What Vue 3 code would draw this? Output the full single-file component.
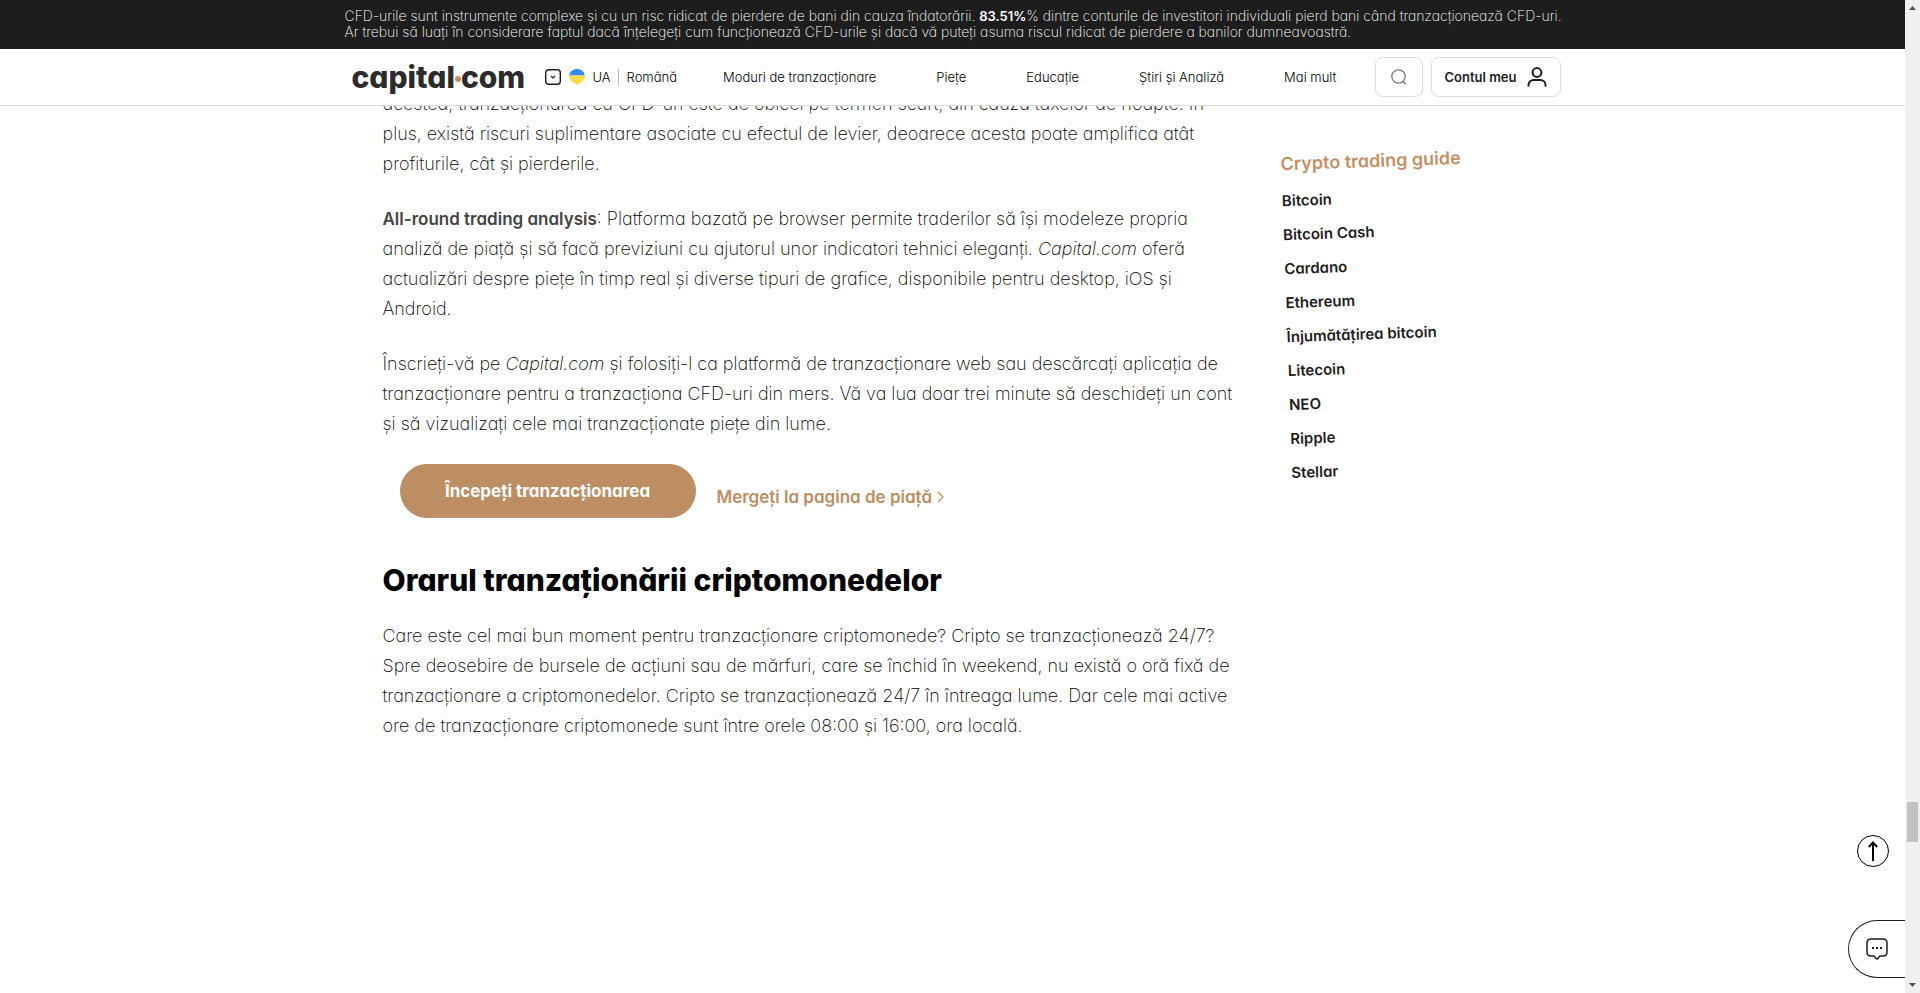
<script setup>
const nav = ['Moduri de tranzacționare', 'Piețe', 'Educație', 'Știri și Analiză', 'Mai mult']
const guides = [
  'Bitcoin',
  'Bitcoin Cash',
  'Cardano',
  'Ethereum',
  'Înjumătățirea bitcoin',
  'Litecoin',
  'NEO',
  'Ripple',
  'Stellar',
]
</script>

<template>
  <div class="screen">
    <div class="page">
      <div class="risk">
        <p class="risk-text">
          CFD-urile sunt instrumente complexe și cu un risc ridicat de pierdere de bani din cauza îndatorării.
          <strong>83.51%</strong>% dintre conturile de investitori individuali pierd bani când tranzacționează CFD-uri.<br />
          Ar trebui să luați în considerare faptul dacă înțelegeți cum funcționează CFD-urile și dacă vă puteți asuma
          riscul ridicat de pierdere a banilor dumneavoastră.
        </p>
      </div>

      <header class="header">
        <div class="header-inner">
          <a class="logo" href="#" aria-label="capital.com">capital<i class="logo-dot"></i>com</a>
          <button class="locale" type="button">
            <svg width="16" height="16" viewBox="0 0 16 16" fill="none" stroke="#1d1d1d">
              <rect x="0.7" y="0.7" width="14.6" height="14.6" rx="3" stroke-width="1.4" />
              <path d="M6 7l2 2 2-2" stroke-width="1.1" />
            </svg>
            <svg class="flag" width="16" height="16" viewBox="0 0 16 16">
              <path d="M0.2 6.500a7.800 6.500 0 0 1 15.600 0z" fill="#338af3" />
              <path d="M0.200 6.500h15.600c0 4.500-2.200 6.500-4.800 7.500L8 16l-3-2C2.400 13 0.200 11 0.200 6.500z" fill="#ffda44" />
            </svg>
            <span class="country">UA</span>
            <span class="lang">Română</span>
          </button>
          <nav class="nav">
            <a v-for="item in nav" :key="item" href="#">{{ item }}</a>
          </nav>
          <div class="actions">
            <button class="box search" type="button" aria-label="Căutare">
              <svg width="16" height="16" viewBox="0 0 16 16" fill="none" stroke="#777" stroke-width="1.300">
                <circle cx="7.500" cy="7.500" r="6.700" />
                <path d="M11.800 12.500l3 2.800" />
              </svg>
            </button>
            <button class="box account" type="button">
              <span>Contul meu</span>
              <svg width="20" height="20" viewBox="0 0 20 20" fill="none" stroke="#1d1d1d" stroke-width="2">
                <circle cx="10" cy="5.500" r="4.400" />
                <path d="M1.500 19.500v-1.500a5 5 0 0 1 5-5h7a5 5 0 0 1 5 5v1.500" />
              </svg>
            </button>
          </div>
        </div>
      </header>

      <div class="content">
        <main class="article">
          <p>
            acestea, tranzacționarea cu CFD-uri este de obicei pe termen scurt, din cauza taxelor de noapte. În<br />
            plus, există riscuri suplimentare asociate cu efectul de levier, deoarece acesta poate amplifica atât<br />
            profiturile, cât și pierderile.
          </p>
          <p>
            <strong>All-round trading analysis</strong>: Platforma bazată pe browser permite traderilor să își modeleze propria<br />
            analiză de piață și să facă previziuni cu ajutorul unor indicatori tehnici eleganți. <em>Capital.com</em> oferă<br />
            actualizări despre piețe în timp real și diverse tipuri de grafice, disponibile pentru desktop, iOS și<br />
            Android.
          </p>
          <p>
            Înscrieți-vă pe <em>Capital.com</em> și folosiți-l ca platformă de tranzacționare web sau descărcați aplicația de<br />
            tranzacționare pentru a tranzacționa CFD-uri din mers. Vă va lua doar trei minute să deschideți un cont<br />
            și să vizualizați cele mai tranzacționate piețe din lume.
          </p>
          <div class="cta">
            <button class="primary" type="button">Începeți tranzacționarea</button>
            <a class="market" href="#">
              Mergeți la pagina de piață
              <svg width="7" height="12" viewBox="0 0 7 12" fill="none" stroke="#bd8d63" stroke-width="1.200">
                <path d="M1 1l5 5-5 5" />
              </svg>
            </a>
          </div>
          <h2>Orarul tranzaționării criptomonedelor</h2>
          <p>
            Care este cel mai bun moment pentru tranzacționare criptomonede? Cripto se tranzacționează 24/7?<br />
            Spre deosebire de bursele de acțiuni sau de mărfuri, care se închid în weekend, nu există o oră fixă de<br />
            tranzacționare a criptomonedelor. Cripto se tranzacționează 24/7 în întreaga lume. Dar cele mai active<br />
            ore de tranzacționare criptomonede sunt între orele 08:00 și 16:00, ora locală.
          </p>
        </main>

        <aside class="guide">
          <h3>Crypto trading guide</h3>
          <ul>
            <li v-for="g in guides" :key="g"><a href="#">{{ g }}</a></li>
          </ul>
        </aside>
      </div>

      <button class="to-top" type="button" aria-label="Sus">
        <svg width="10" height="20" viewBox="0 0 10 20" fill="none" stroke="#000" stroke-width="2">
          <path d="M5 20V1.500M0.800 6L5 1.500 9.200 6" />
        </svg>
      </button>
      <button class="chat" type="button" aria-label="Chat">
        <svg width="22" height="22" viewBox="0 0 22 22" fill="none" stroke="#1d1d1d" stroke-width="1.500">
          <path d="M5 1h12q4 0 4 4v9q0 4-4 4h-2.500q-1 0-1.500 1l-.8 1.300q-1.200 1.300-2.400 0L9 19q-.5-1-1.500-1H5q-4 0-4-4V5q0-4 4-4z" />
          <path d="M6 10h2M10 10h2M14 10h2" stroke-width="2" />
        </svg>
      </button>
    </div>

    <div class="scrollbar" aria-hidden="true">
      <svg width="7" height="4" viewBox="0 0 7 4"><path d="M0 4L3.500 0 7 4z" fill="#505050" /></svg>
      <div class="track"><div class="thumb"></div></div>
      <svg width="7" height="4" viewBox="0 0 7 4"><path d="M0 0L3.500 4 7 0z" fill="#505050" /></svg>
    </div>
  </div>
</template>

<style>
body {
  margin: 0;
  background: #fff;
}
</style>

<style scoped>
.screen {
  display: flex;
  height: 100vh;
  overflow: hidden;
  font-family: Inter, "Open Sans", sans-serif;
  font-feature-settings: "cv11" 1;
  color: #1d1d1d;
}
.page {
  position: relative;
  flex: 1;
  min-width: 0;
  overflow: hidden;
}
button {
  font-family: inherit;
  font-feature-settings: inherit;
  color: inherit;
  cursor: pointer;
}
a {
  color: inherit;
  text-decoration: none;
}
.risk {
  position: relative;
  z-index: 1;
  padding: 8px 0 9px;
  background: #1d1d1d;
  color: #fff;
}
.risk-text {
  max-width: 1216px;
  margin: 0 auto;
  font-size: 14px;
  line-height: 16px;
  font-weight: 200;
  white-space: nowrap;
}
.risk-text strong {
  font-size: 13px;
  font-weight: 600;
}
.header {
  position: relative;
  z-index: 1;
  border-bottom: 1px solid #dcdcdc;
  background: #fff;
}
.header-inner {
  display: flex;
  align-items: center;
  box-sizing: border-box;
  max-width: 1216px;
  height: 56px;
  margin: 0 auto;
  padding: 0 0 0 7px;
}
.logo {
  display: flex;
  align-items: center;
  width: 193px;
  font-size: 30px;
  line-height: 40px;
  font-weight: 800;
  color: #2b2b2b;
}
.logo-dot {
  width: 6px;
  height: 6px;
  margin-top: 4px;
  border-radius: 50%;
  background: #c58f65;
}
.locale {
  display: flex;
  align-items: center;
  padding: 0;
  border: 0;
  background: none;
  font-size: 13px;
  line-height: 16px;
  font-weight: 300;
  color: #000;
}
.flag {
  margin: 0 8px;
}
.country {
  padding-right: 7px;
  border-right: 1px solid #bbb;
}
.lang {
  padding-left: 8px;
}
.nav {
  display: flex;
  flex: 1;
  justify-content: space-between;
  padding: 0 38px 0 46px;
  font-size: 13px;
  line-height: 16px;
  font-weight: 300;
  color: #000;
  white-space: nowrap;
}
.actions {
  display: flex;
  gap: 8px;
}
.box {
  display: flex;
  align-items: center;
  justify-content: center;
  box-sizing: border-box;
  height: 40px;
  border: 1px solid #dcdcdc;
  border-radius: 8px;
  background: #fff;
}
.search {
  width: 48px;
}
.account {
  gap: 10px;
  width: 130px;
  padding: 0;
  font-size: 13px;
  font-weight: 600;
  white-space: nowrap;
}
.content {
  display: flex;
  align-items: flex-start;
  max-width: 1140px;
  margin: -17px auto 0;
}
.article {
  flex: 1;
  min-width: 0;
  font-size: 18px;
  line-height: 30px;
  font-weight: 200;
  color: #000;
  white-space: nowrap;
}
.article p {
  margin: 0 0 25px;
}
.article strong {
  font-size: 17px;
  font-weight: 600;
  color: #444;
}
.cta {
  display: flex;
  align-items: center;
  gap: 21px;
  margin-left: 17px;
}
.primary {
  height: 54px;
  width: 296px;
  padding: 0;
  border: 0;
  border-radius: 27px;
  background: #bd8d63;
  color: #fff;
  font-size: 17px;
  font-weight: 700;
}
.market {
  display: flex;
  align-items: center;
  gap: 5px;
  padding-top: 12px;
  color: #bd8d63;
  font-size: 17px;
  font-weight: 600;
}
h2 {
  margin: 42px 0 21px;
  font-size: 30px;
  line-height: 40px;
  font-weight: 800;
  color: #000;
}
.guide {
  width: 237px;
  margin-top: 57px;
  transform: rotate(-2deg);
  white-space: nowrap;
}
h3 {
  margin: 0;
  font-size: 18px;
  line-height: 28px;
  font-weight: 600;
  color: #c58f65;
}
ul {
  margin: 6px 0 0;
  padding: 0;
  list-style: none;
}
li {
  font-size: 15px;
  line-height: 34px;
  font-weight: 600;
}
.to-top {
  position: absolute;
  right: 16px;
  bottom: 126px;
  display: flex;
  align-items: center;
  justify-content: center;
  width: 32px;
  height: 32px;
  padding: 0;
  border: 1px solid #000;
  border-radius: 50%;
  background: #fff;
}
.chat {
  position: absolute;
  right: 0;
  bottom: 15px;
  display: flex;
  align-items: center;
  box-sizing: border-box;
  width: 57px;
  height: 58px;
  padding: 0 0 0 17px;
  border: 1px solid #1d1d1d;
  border-right: 0;
  border-radius: 29px 0 0 29px;
  background: #fff;
}
.scrollbar {
  display: flex;
  flex-direction: column;
  align-items: center;
  box-sizing: border-box;
  width: 15px;
  padding: 6px 0;
  background: #f0f0f0;
}
.track {
  display: flex;
  flex: 1;
  flex-direction: column;
  justify-content: flex-end;
  padding-bottom: 141px;
}
.thumb {
  width: 11px;
  height: 40px;
  background: #c1c1c1;
}
</style>
